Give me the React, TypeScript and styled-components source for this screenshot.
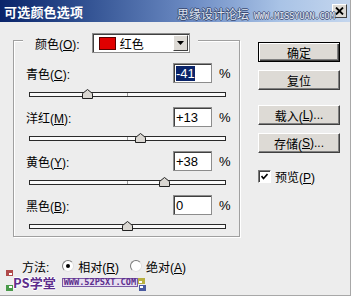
import React from 'react';
import styled, { createGlobalStyle } from 'styled-components';

const FACE = '#ededed';
const BUTTON_FACE = '#dddad5';
const UI_FONT = '"Liberation Sans", "Noto Sans CJK SC", sans-serif';

const GlobalStyle = createGlobalStyle`
  html, body {
    margin: 0;
    padding: 0;
    background: ${FACE};
  }
  body {
    font-family: ${UI_FONT};
    font-size: 12px;
    color: #000;
  }
`;

const Window = styled.div`
  position: relative;
  width: 351px;
  height: 296px;
  box-sizing: border-box;
  background: ${FACE};
  border-right: 1px solid #a8a8a8;
  border-bottom: 1px solid #a8a8a8;
  display: flex;
  flex-direction: column;
  overflow: hidden;
`;

const TitleBar = styled.div`
  position: relative;
  height: 22px;
  flex-shrink: 0;
  display: flex;
  align-items: center;
  padding: 0 3px 0 4px;
  background: linear-gradient(to right, #0a246a 0%, #2d4d8e 22%, #6d8cc4 55%, #a9c3e6 80%, #c4d6ee 100%);
`;

const TitleText = styled.span`
  color: #fff;
  font-family: "Noto Sans CJK SC", sans-serif;
  font-weight: 700;
  font-size: 13px;
  letter-spacing: 0.2px;
`;

const TitleStamp = styled.div`
  position: absolute;
  left: 177px;
  top: 7px;
  display: flex;
  align-items: flex-end;
  gap: 5px;
  z-index: 2;
  pointer-events: none;
`;

const StampCn = styled.span`
  font-family: "Noto Sans CJK SC", sans-serif;
  font-size: 12px;
  line-height: 14px;
  color: #dfe5f0;
  text-shadow: 1px 0 #3c4c74, -1px 0 #3c4c74, 0 1px #3c4c74, 0 -1px #3c4c74;
`;

const StampUrl = styled.span`
  font-family: "DejaVu Sans Mono", monospace;
  font-size: 8.4px;
  line-height: 9px;
  color: #e8edf5;
  text-shadow: 1px 0 #4a5a80, -1px 0 #4a5a80, 0 1px #4a5a80, 0 -1px #4a5a80;
`;

const CloseButton = styled.div`
  margin-left: auto;
  width: 15px;
  height: 14px;
  box-sizing: border-box;
  background: ${BUTTON_FACE};
  border: 1px solid;
  border-color: #fff #404040 #404040 #fff;
  display: flex;
  align-items: center;
  justify-content: center;
`;

const Body = styled.div`
  display: flex;
  flex: 1;
`;

const LeftCol = styled.div`
  width: 240px;
  box-sizing: border-box;
  padding: 18px 0 0 13px;
  display: flex;
  flex-direction: column;
`;

const GroupBox = styled.div`
  width: 227px;
  height: 197px;
  box-sizing: border-box;
  border: 1px solid #a0a0a0;
  box-shadow: inset 1px 1px 0 #fff, 1px 1px 0 #fff;
  display: flex;
  flex-direction: column;
`;

const GroupHeader = styled.div`
  align-self: flex-start;
  margin: -8px 0 0 9px;
  padding: 0 8px 0 12px;
  height: 20px;
  background: ${FACE};
  display: flex;
  align-items: center;
`;

const HeaderLabel = styled.span`
  margin-right: 12px;
`;

const U = styled.span`
  text-decoration: underline;
`;

const Dropdown = styled.div`
  width: 98px;
  height: 20px;
  box-sizing: border-box;
  background: #fff;
  border: 1px solid #8c8c8c;
  box-shadow: inset 1px 1px 0 #404040;
  display: flex;
  align-items: center;
  padding-left: 6px;
`;

const Swatch = styled.span<{ $color: string }>`
  width: 17px;
  height: 13px;
  box-sizing: border-box;
  background: ${p => p.$color};
  border: 1px solid #5a0000;
  margin-right: 4px;
`;

const DropArrow = styled.span`
  margin-left: auto;
  margin-right: 1px;
  width: 15px;
  height: 16px;
  box-sizing: border-box;
  background: ${BUTTON_FACE};
  border: 1px solid;
  border-color: #fff #404040 #404040 #fff;
  display: flex;
  align-items: center;
  justify-content: center;
`;

const RowList = styled.div`
  display: flex;
  flex-direction: column;
  padding: 10px 0 0 12px;
`;

const Row = styled.div`
  height: 44px;
  display: flex;
  flex-direction: column;
`;

const RowTop = styled.div`
  height: 20px;
  display: flex;
  align-items: center;
`;

const RowLabel = styled.span`
  width: 147px;
`;

const ValueBox = styled.div`
  width: 39px;
  height: 20px;
  box-sizing: border-box;
  background: #fff;
  border: 1px solid #8c8c8c;
  box-shadow: inset 1px 1px 0 #404040;
  padding-left: 2px;
  display: flex;
  align-items: center;
  font-size: 13px;
`;

const Selected = styled.span`
  background: #0a246a;
  color: #fff;
  line-height: 15px;
`;

const Percent = styled.span`
  margin-left: 7px;
  font-size: 13px;
`;

const Track = styled.div`
  position: relative;
  margin: 9px 0 0 3px;
  width: 197px;
  height: 5px;
  box-sizing: border-box;
  border: 1px solid #2a2a2a;
  background: #fafafa;

  &::after {
    content: '';
    position: absolute;
    left: 97px;
    top: 0;
    width: 1px;
    height: 3px;
    background: #9a9a9a;
  }
`;

const Thumb = styled.svg`
  position: absolute;
  bottom: -3px;
  z-index: 1;
`;

const MethodRow = styled.div`
  margin: 22px 0 0 9px;
  height: 14px;
  display: flex;
  align-items: center;
  white-space: nowrap;
`;

const MethodLabel = styled.span`
  margin-right: 13px;
`;

const Radio = styled.span<{ $checked?: boolean }>`
  width: 12px;
  height: 12px;
  box-sizing: border-box;
  border-radius: 50%;
  background: #fff;
  border: 1px solid;
  border-color: #7a7a7a #e0e0e0 #e0e0e0 #7a7a7a;
  display: flex;
  align-items: center;
  justify-content: center;
  margin-right: 4px;

  &::after {
    content: '';
    width: 4px;
    height: 4px;
    border-radius: 50%;
    background: ${p => (p.$checked ? '#000' : 'transparent')};
  }
`;

const RadioText = styled.span<{ $gap?: number }>`
  margin-right: ${p => p.$gap ?? 0}px;
`;

const RightCol = styled.div`
  margin-left: 18px;
  padding-top: 20px;
  display: flex;
  flex-direction: column;
`;

const PushButton = styled.div<{ $default?: boolean; $gap: number }>`
  margin-top: ${p => p.$gap}px;
  width: 82px;
  height: 20px;
  box-sizing: border-box;
  background: ${BUTTON_FACE};
  display: flex;
  align-items: center;
  justify-content: center;
  border: 1px solid;
  border-color: ${p => (p.$default ? '#000' : '#fff #404040 #404040 #fff')};
  box-shadow: ${p =>
    p.$default
      ? 'inset 1px 1px 0 #fff, inset -1px -1px 0 #404040, inset -2px -2px 0 #808080'
      : 'inset -1px -1px 0 #808080'};
`;

const CheckRow = styled.div`
  margin-top: 15px;
  display: flex;
  align-items: center;
`;

const CheckBox = styled.span`
  width: 13px;
  height: 13px;
  box-sizing: border-box;
  background: #fff;
  border: 1px solid;
  border-color: #7a7a7a #fff #fff #7a7a7a;
  box-shadow: inset 1px 1px 0 #404040;
  display: flex;
  align-items: center;
  justify-content: center;
  margin-right: 4px;
`;

const SiteMark = styled.div`
  position: absolute;
  left: 13px;
  top: 276px;
  display: flex;
  align-items: center;
  pointer-events: none;
`;

const SiteName = styled.span`
  font-family: "Noto Sans CJK SC", sans-serif;
  font-weight: 700;
  font-size: 13px;
  line-height: 13px;
  color: #5c2d8c;
  text-shadow: 1px 0 #fff, -1px 0 #fff, 0 1px #fff, 0 -1px #fff;
  margin-right: 6px;
`;

const SiteUrl = styled.span`
  font-family: "DejaVu Sans Mono", monospace;
  font-weight: 700;
  font-size: 8.6px;
  line-height: 7px;
  padding: 0 1px;
  color: #5c2d8c;
  background: #e6def0;
  border: 1px solid #7b5aa6;
`;

const Corner = styled.span<{ $x: number; $y: number; $color: string; $sides: string }>`
  position: absolute;
  left: ${p => p.$x}px;
  top: ${p => p.$y}px;
  width: 7px;
  height: 6px;
  box-sizing: border-box;
  background: #fff;
  border: 1px solid ${p => p.$color};
  box-shadow: inset ${p => p.$sides} 0 ${p => p.$color};
`;

const sliders = [
  { name: '青色', key: 'C', value: -41, selected: true },
  { name: '洋红', key: 'M', value: 13 },
  { name: '黄色', key: 'Y', value: 38 },
  { name: '黑色', key: 'B', value: 0 },
];

const fmt = (v: number) => (v > 0 ? `+${v}` : `${v}`);

const ThumbIcon = ({ value }: { value: number }) => {
  const center = 98 + value * 0.985;
  return (
    <Thumb width="11" height="10" viewBox="0 0 11 10" style={{ left: center - 6 }}>
      <polygon points="0.5,4.5 5.5,0.5 10.5,4.5 10.5,9.5 0.5,9.5" fill="#dad7d2" stroke="#222" />
    </Thumb>
  );
};

export default function App() {
  return (
    <>
      <GlobalStyle />
      <Window>
        <TitleBar>
          <TitleText>可选颜色选项</TitleText>
          <TitleStamp>
            <StampCn>思缘设计论坛</StampCn>
            <StampUrl>WWW.MISSYUAN.COM</StampUrl>
          </TitleStamp>
          <CloseButton>
            <svg width="9" height="8" viewBox="0 0 9 8">
              <path d="M1 0.5 L8 7.5 M8 0.5 L1 7.5" stroke="#000" strokeWidth="1.8" />
            </svg>
          </CloseButton>
        </TitleBar>

        <Body>
          <LeftCol>
            <GroupBox>
              <GroupHeader>
                <HeaderLabel>
                  颜色(<U>O</U>):
                </HeaderLabel>
                <Dropdown>
                  <Swatch $color="#e00000" />
                  <span>红色</span>
                  <DropArrow>
                    <svg width="7" height="4" viewBox="0 0 7 4">
                      <polygon points="0,0 7,0 3.5,4" fill="#000" />
                    </svg>
                  </DropArrow>
                </Dropdown>
              </GroupHeader>

              <RowList>
                {sliders.map(s => (
                  <Row key={s.key}>
                    <RowTop>
                      <RowLabel>
                        {s.name}(<U>{s.key}</U>):
                      </RowLabel>
                      <ValueBox>
                        {s.selected ? <Selected>{fmt(s.value)}</Selected> : fmt(s.value)}
                      </ValueBox>
                      <Percent>%</Percent>
                    </RowTop>
                    <Track>
                      <ThumbIcon value={s.value} />
                    </Track>
                  </Row>
                ))}
              </RowList>
            </GroupBox>

            <MethodRow>
              <MethodLabel>方法:</MethodLabel>
              <Radio $checked />
              <RadioText $gap={11}>
                相对(<U>R</U>)
              </RadioText>
              <Radio />
              <RadioText>
                绝对(<U>A</U>)
              </RadioText>
            </MethodRow>
          </LeftCol>

          <RightCol>
            <PushButton $default $gap={0}>确定</PushButton>
            <PushButton $gap={8}>复位</PushButton>
            <PushButton $gap={15}>
              载入(<U>L</U>)...
            </PushButton>
            <PushButton $gap={8}>
              存储(<U>S</U>)...
            </PushButton>
            <CheckRow>
              <CheckBox>
                <svg width="7" height="7" viewBox="0 0 7 7">
                  <path d="M0.5 3 L2.5 5.5 L6.5 1" stroke="#000" strokeWidth="1.6" fill="none" />
                </svg>
              </CheckBox>
              <span>
                预览(<U>P</U>)
              </span>
            </CheckRow>
          </RightCol>
        </Body>

        <SiteMark>
          <SiteName>PS学堂</SiteName>
          <SiteUrl>WWW.52PSXT.COM</SiteUrl>
        </SiteMark>
        <Corner $x={6} $y={270} $color="#b04a4a" $sides="2px 2px" />
        <Corner $x={6} $y={285} $color="#4a9a4a" $sides="2px -2px" />
        <Corner $x={138} $y={278} $color="#b8b040" $sides="-2px 2px" />
        <Corner $x={139} $y={285} $color="#4a5aa0" $sides="-2px -2px" />
      </Window>
    </>
  );
}
